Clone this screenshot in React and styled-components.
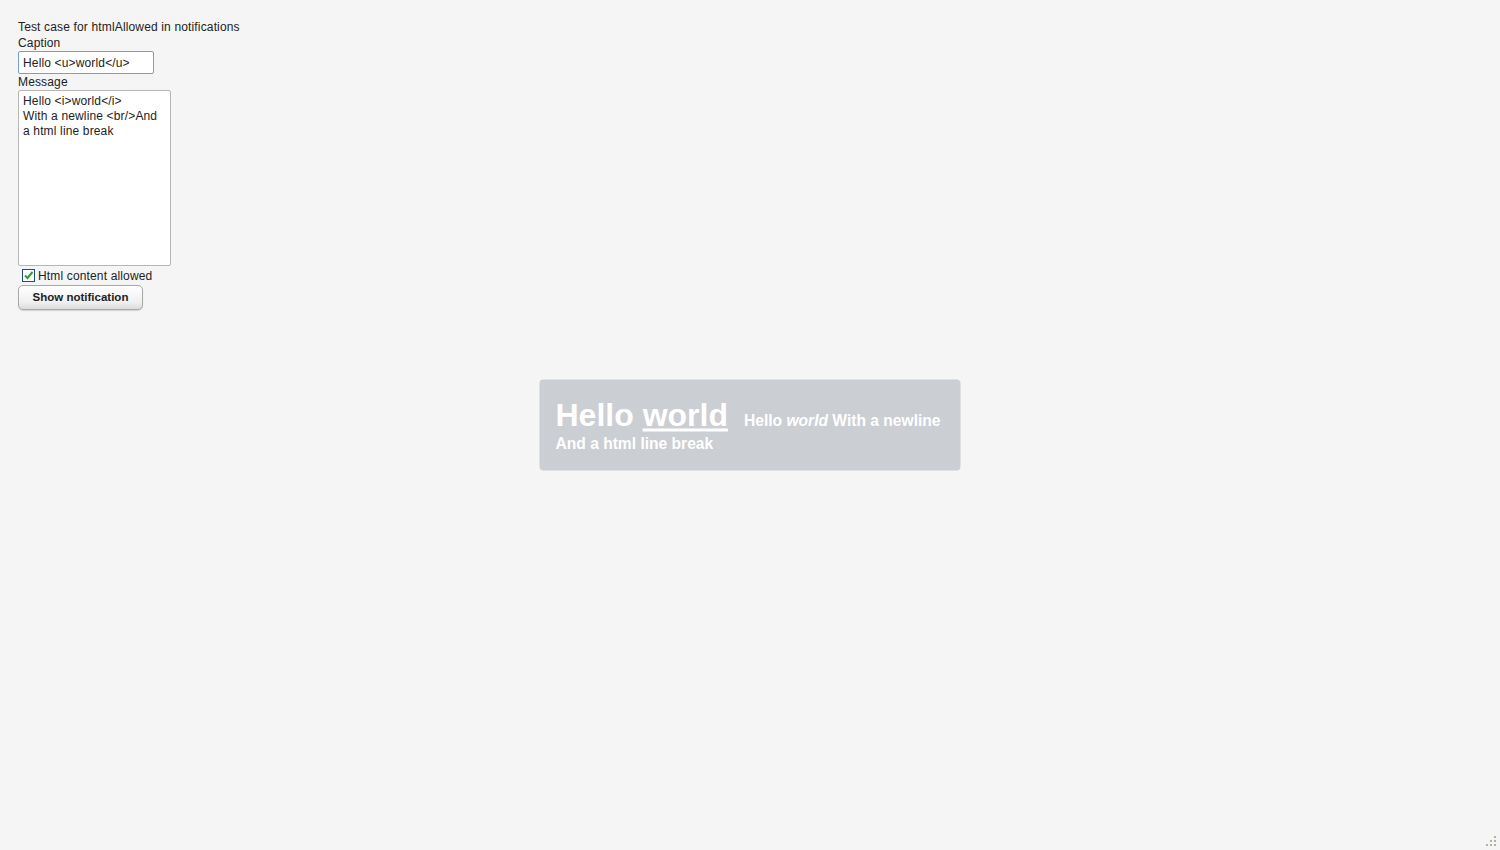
import React from "react";
import styled, { createGlobalStyle } from "styled-components";

const Global = createGlobalStyle`
  html, body { margin:0; padding:0; height:100%; }
  body {
    background:#f5f5f5;
    font-family:"Liberation Sans", Arial, sans-serif;
    font-size:12px;
    letter-spacing:0.15px;
    color:#222;
  }
  #root { height:100%; }
`;

const Page = styled.div`
  position:relative;
  width:100%;
  height:100vh;
  overflow:hidden;
`;

const Form = styled.div`
  display:flex;
  flex-direction:column;
  align-items:flex-start;
  padding:19px 0 0 18px;
`;

const Label = styled.div`
  line-height:17px;
  height:16px;
`;

const TextInput = styled.input`
  box-sizing:border-box;
  width:136px;
  height:23px;
  margin:0;
  padding:2px 4px;
  border:1px solid #6fa2d1;
  border-radius:2px;
  background:#fff;
  font-family:inherit;
  font-size:12px;
  letter-spacing:0.15px;
  color:#222;
  outline:none;
`;

const TextArea = styled.textarea`
  box-sizing:border-box;
  width:153px;
  height:176px;
  margin:0;
  padding:3px 4px;
  border:1px solid #b6b6b6;
  border-radius:2px;
  background:#fff;
  font-family:inherit;
  font-size:12px;
  letter-spacing:0.15px;
  line-height:15px;
  color:#222;
  resize:none;
  outline:none;
`;

const CheckRow = styled.label`
  display:flex;
  align-items:center;
  gap:3px;
  height:19px;
  padding-left:4px;
`;

const CheckBox = styled.span`
  box-sizing:border-box;
  width:13px;
  height:13px;
  border:1px solid #1f4f7f;
  background:#fff;
  display:flex;
  align-items:center;
  justify-content:center;
`;

const Button = styled.button`
  box-sizing:border-box;
  width:125px;
  height:25px;
  margin:0;
  padding:0 0 1px;
  border:1px solid #a9a9a9;
  border-radius:5px;
  background:linear-gradient(#ffffff, #f0f0f0 70%, #dcdcdc);
  box-shadow:0 1px 1px rgba(0,0,0,0.15);
  font-family:inherit;
  font-weight:bold;
  font-size:11.5px;
  color:#222;
`;

const Notification = styled.div`
  position:absolute;
  left:50%;
  top:50%;
  transform:translate(-50%, -50%);
  box-sizing:border-box;
  width:421px;
  height:91px;
  padding:19px 16px;
  border-radius:4px;
  background:#cbced3;
  color:#fff;
  letter-spacing:0;
`;

const NoteCaption = styled.span`
  font-size:32px;
  font-weight:bold;
  line-height:32px;
  margin-right:16px;
  u { text-decoration-thickness:3px; text-underline-offset:3px; }
`;

const NoteMessage = styled.span`
  font-size:15.6px;
  font-weight:bold;
  line-height:23px;
`;

const Grip = styled.svg`
  position:absolute;
  right:2px;
  bottom:2px;
`;

export default function App() {
  return (
    <Page>
      <Global />
      <Form>
        <Label>Test case for htmlAllowed in notifications</Label>
        <Label>Caption</Label>
        <TextInput defaultValue="Hello <u>world</u>" />
        <Label>Message</Label>
        <TextArea defaultValue={"Hello <i>world</i>\nWith a newline <br/>And a html line break"} />
        <CheckRow>
          <CheckBox>
            <svg width="11" height="11" viewBox="0 0 11 11">
              <path d="M2 5.5 L4.5 8 L9.5 2" fill="none" stroke="#2a9d2a" strokeWidth="2" />
            </svg>
          </CheckBox>
          Html content allowed
        </CheckRow>
        <Button>Show notification</Button>
      </Form>
      <Notification>
        <NoteCaption>Hello <u>world</u></NoteCaption>
        <NoteMessage>Hello <i>world</i> With a newline<br />And a html line break</NoteMessage>
      </Notification>
      <Grip width="12" height="12" viewBox="0 0 12 12">
        <g fill="#b5b09c">
          <rect x="8" y="0" width="2" height="2" />
          <rect x="4" y="4" width="2" height="2" />
          <rect x="8" y="4" width="2" height="2" />
          <rect x="0" y="8" width="2" height="2" />
          <rect x="4" y="8" width="2" height="2" />
          <rect x="8" y="8" width="2" height="2" />
        </g>
      </Grip>
    </Page>
  );
}
